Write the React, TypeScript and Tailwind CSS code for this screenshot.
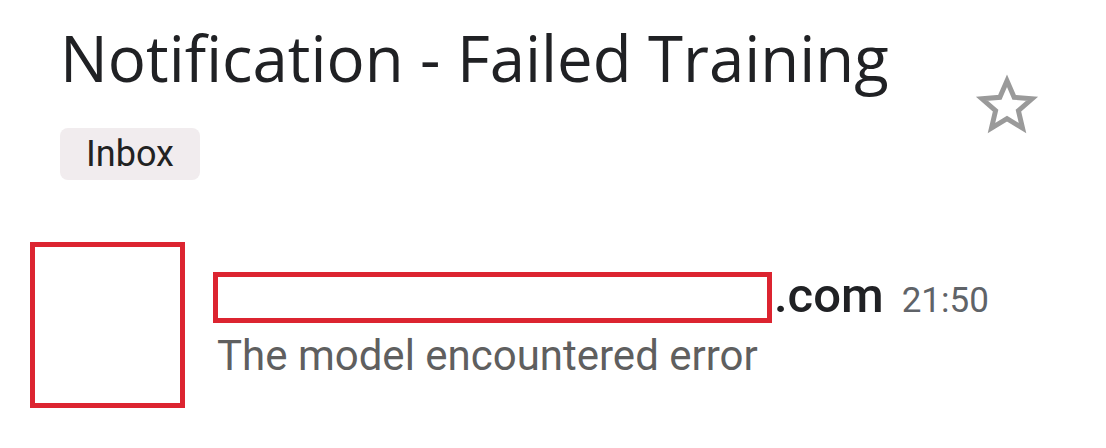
import React from 'react';

const Star: React.FC = () => (
  <svg width="70" height="66" viewBox="0 0 24 24" className="text-[#9a9a9a]">
    <path
      d="M12 3.2l2.6 6 6.5.55-4.95 4.28 1.5 6.37L12 17l-5.65 3.4 1.5-6.37L2.9 9.75l6.5-.55z"
      fill="none"
      stroke="currentColor"
      strokeWidth="1.8"
      strokeLinejoin="miter"
    />
  </svg>
);

const App: React.FC = () => {
  return (
    <div className="w-[1106px] h-[448px] bg-white overflow-hidden font-['Roboto',sans-serif]">
      <div className="flex justify-between pl-[60px] pr-[64px] pt-[20px]">
        <div>
          <h1 className="text-[63.5px] leading-[76px] text-[#202124] font-['Open_Sans',sans-serif]">
            Notification - Failed Training
          </h1>
          <span className="inline-flex items-center mt-[32px] h-[52px] px-[26px] rounded-lg bg-[#f1ecee] text-[36px] text-[#222]">
            Inbox
          </span>
        </div>
        <div className="pt-[52px]">
          <Star />
        </div>
      </div>

      <div className="flex items-start mt-[62px] pl-[30px]">
        <div className="w-[155px] h-[166px] border-[5px] border-[#dc2430] shrink-0" />
        <div className="ml-[28px] pt-[30px]">
          <div className="flex items-end">
            <div className="w-[559px] h-[51px] border-[5px] border-[#dc2430]" />
            <span className="text-[49px] leading-[44px] font-medium text-[#202124] ml-[2px] mb-[5px]">.com</span>
            <span className="text-[35px] leading-[44px] text-[#5f6368] ml-[18px]">21:50</span>
          </div>
          <div className="text-[42px] leading-[50px] text-[#5f5f5f] ml-[4px] mt-[8px]">
            The model encountered error
          </div>
        </div>
      </div>
    </div>
  );
};

export default App;
